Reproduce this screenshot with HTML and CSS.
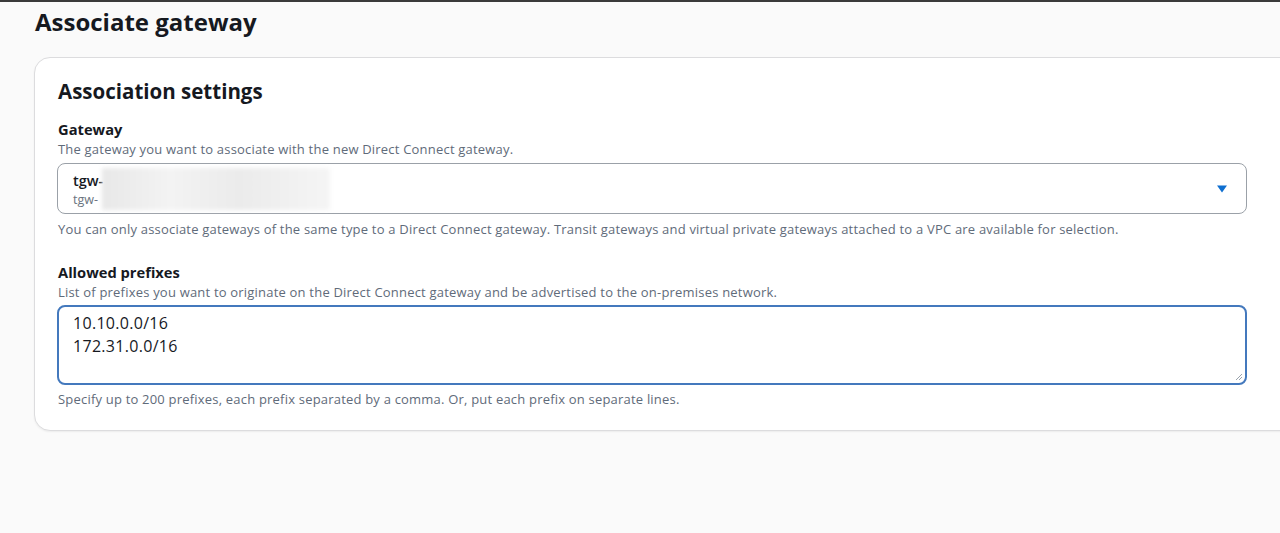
FILE: index.html
```html
<!DOCTYPE html>
<html>
<head>
<meta charset="utf-8">
<link rel="stylesheet" href="styles.css">
</head>
<body>
<div class="page">
  <h1 class="title">Associate gateway</h1>
  <section class="card">
    <h2 class="card-title">Association settings</h2>
    <div class="field">
      <div class="label">Gateway</div>
      <div class="desc">The gateway you want to associate with the new Direct Connect gateway.</div>
      <div class="select">
        <div class="select-text">
          <div class="opt-main">tgw-</div>
          <div class="opt-sub">tgw-</div>
        </div>
        <div class="blur"></div>
        <svg class="caret" width="12" height="10" viewBox="0 0 12 10"><path d="M1 1.5h10L6 8.5z" fill="#0f6fd0"/></svg>
      </div>
      <div class="hint">You can only associate gateways of the same type to a Direct Connect gateway. Transit gateways and virtual private gateways attached to a VPC are available for selection.</div>
    </div>
    <div class="field second">
      <div class="label">Allowed prefixes</div>
      <div class="desc desc-tight">List of prefixes you want to originate on the Direct Connect gateway and be advertised to the on-premises network.</div>
      <div class="textarea">
        <div>10.10.0.0/16</div>
        <div>172.31.0.0/16</div>
        <svg class="grip" width="10" height="10" viewBox="0 0 10 10"><path d="M9 3L3 9M9 6L6 9" stroke="#9aa3ad" stroke-width="1"/></svg>
      </div>
      <div class="hint hint-tight">Specify up to 200 prefixes, each prefix separated by a comma. Or, put each prefix on separate lines.</div>
    </div>
  </section>
</div>
</body>
</html>
```
FILE: styles.css
```css
html, body {
  margin: 0;
  padding: 0;
  background: #fafafa;
  overflow: hidden;
  height: 533px;
}
body {
  font-family: "Open Sans", "Noto Sans", sans-serif;
  color: #16191f;
  border-top: 2px solid #3a3a3a;
}
.page {
  padding-left: 34px;
}
.title {
  margin: 0;
  padding: 3px 0 0 1px;
  font-size: 24px;
  font-weight: 700;
  line-height: 34px;
  color: #16191f;
}
.card {
  margin-top: 18px;
  width: 1280px;
  box-sizing: border-box;
  background: #fff;
  border: 1px solid #dcdcde;
  border-radius: 16px;
  padding: 19px 0 22px 22px;
  box-shadow: 0 1px 2px rgba(0,0,0,0.06);
}
.card-title {
  margin: 0 0 14px 1px;
  font-size: 20.5px;
  font-weight: 700;
  line-height: 28px;
}
.field {
  width: 1190px;
}
.second {
  margin-top: 24px;
}
.label {
  font-size: 14.7px;
  font-weight: 700;
  line-height: 20px;
  padding-left: 1px;
}
.desc, .hint {
  font-size: 13px;
  letter-spacing: 0.2px;
  line-height: 18px;
  color: #5f6b7a;
  padding-left: 1px;
}
.desc {
  line-height: 20px;
  margin-bottom: 4px;
}
.desc-tight {
  margin-bottom: 3px;
}
.hint {
  margin-top: 6px;
}
.hint-tight {
  margin-top: 5px;
}
.select {
  position: relative;
  height: 51px;
  box-sizing: border-box;
  border: 1px solid #9ba1a8;
  border-radius: 8px;
  background: #fff;
  display: flex;
  align-items: center;
  padding: 0 16px 0 15px;
}
.select-text {
  flex: 1;
  align-self: flex-start;
  padding-top: 7px;
}
.opt-main {
  font-size: 14.5px;
  font-weight: 600;
  line-height: 19px;
}
.opt-sub {
  font-size: 12.5px;
  line-height: 19px;
  color: #6b7480;
}
.blur {
  position: absolute;
  left: 44px;
  top: 4px;
  width: 228px;
  height: 42px;
  background: linear-gradient(90deg, #e8e8e8 0%, #f3f3f3 30%, #ebebeb 60%, #f5f5f5 100%);
  filter: blur(2px);
}
.caret {
  display: block;
  margin-right: 2px;
}
.textarea {
  position: relative;
  height: 80px;
  box-sizing: border-box;
  border: 2px solid #4479bd;
  border-radius: 8px;
  background: #fff;
  padding: 5px 0 0 14px;
  font-size: 16px;
  letter-spacing: 0.3px;
  line-height: 23px;
  color: #16191f;
}
.grip {
  position: absolute;
  right: 2px;
  bottom: 2px;
}
```
